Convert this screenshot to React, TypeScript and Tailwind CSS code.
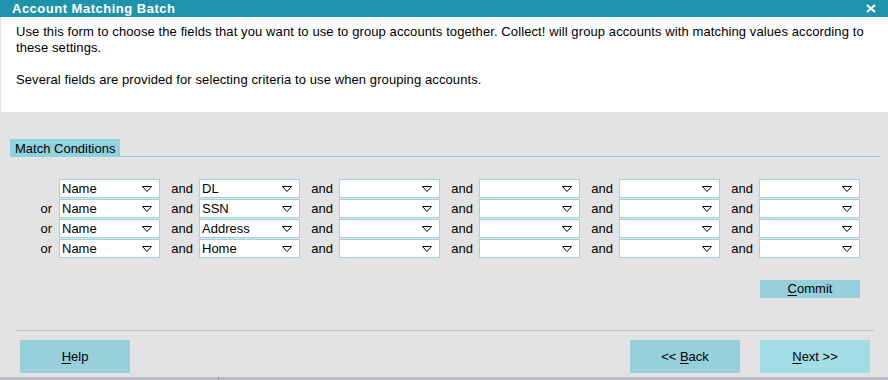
const firstColumn = ["Name", "Name", "Name", "Name"];
const secondColumn = ["DL", "SSN", "Address", "Home"];

function Arrow() {
  return (
    <svg width="10" height="6" viewBox="0 0 10 6" className="shrink-0">
      <path d="M0.5 0.5 H9.5 L5 5.5 Z" fill="none" stroke="#000" strokeWidth="1" />
    </svg>
  );
}

function Combo({ value }: { value: string }) {
  return (
    <div className="flex h-[19px] w-[101px] items-center justify-between border border-[#9dd3dc] bg-white pl-[2px] pr-[7px] text-[13px] leading-none text-black">
      <span>{value}</span>
      <Arrow />
    </div>
  );
}

function Btn({ label, hot, rest, light }: { label?: string; hot: string; rest: string; light?: boolean }) {
  return (
    <button
      className={
        "block h-[33px] w-[110px] whitespace-pre text-center text-[13px] leading-[33px] text-black " +
        (light ? "bg-[#a2dce4]" : "bg-[#97cfdb]")
      }
    >
      {label}
      <span className="underline underline-offset-2">{hot}</span>
      {rest}
    </button>
  );
}

export default function App() {
  return (
    <div className="flex h-[380px] w-[888px] flex-col bg-[#e3e3e3] font-['Liberation_Sans',Arial,sans-serif]">
      <div className="flex h-[17px] items-center justify-between bg-[#1f93ab] pl-[12px] pr-[12px] text-white">
        <span className="text-[13px] font-bold tracking-[0.5px]">Account Matching Batch</span>
        <svg width="10" height="9" viewBox="0 0 10 9">
          <path d="M1 1 L9 8 M9 1 L1 8" stroke="#fff" strokeWidth="2.2" />
        </svg>
      </div>

      <div className="ml-px h-[95px] bg-white pl-[15px] pr-[20px] pt-[7px] text-[13px] leading-[16px] tracking-[0.1px] text-black">
        <p>
          Use this form to choose the fields that you want to use to group accounts together. Collect! will group
          accounts with matching values according to these settings.
        </p>
        <p className="mt-[16px]">Several fields are provided for selecting criteria to use when grouping accounts.</p>
      </div>

      <div className="mt-[27px] flex items-end pl-[10px] pr-[8px]">
        <div className="h-[18px] bg-[#8fd3df] px-[5px] text-[13px] leading-[19px] text-black">Match Conditions</div>
        <div className="h-px flex-1 bg-[#8fd0db]" />
      </div>

      <div className="mt-[22px] flex flex-col gap-px pl-[20px]">
        {firstColumn.map((first, r) => (
          <div key={r} className="flex h-[19px] items-center text-[13px] leading-[19px] text-black">
            <span className="w-[39px] pr-[7px] text-right">{r === 0 ? "" : "or"}</span>
            <Combo value={first} />
            <span className="w-[39px] pr-[6px] text-right">and</span>
            <Combo value={secondColumn[r]} />
            {[0, 1, 2, 3].map((c) => (
              <div key={c} className="flex items-center">
                <span className="w-[39px] pr-[6px] text-right">and</span>
                <Combo value="" />
              </div>
            ))}
          </div>
        ))}
      </div>

      <div className="mt-[22px] flex justify-end pr-[28px]">
        <button className="h-[18px] w-[100px] bg-[#97cfdb] text-[13px] leading-[18px] text-black">
          <span className="underline underline-offset-2">C</span>ommit
        </button>
      </div>

      <div className="ml-[15px] mr-[14px] mt-[32px] h-px bg-[#c4c4c4]" />

      <div className="flex justify-between pl-[20px] pr-[18px] pt-[9px]">
        <Btn hot="H" rest="elp" />
        <div className="flex gap-[20px]">
          <Btn label="<< " hot="B" rest="ack" />
          <Btn hot="N" rest="ext >>" light />
        </div>
      </div>

      <div className="mt-auto flex h-[3px] bg-[#b9b8c9]">
        <div className="w-[219px] border-r border-[#9c9cab]" />
      </div>
    </div>
  );
}
